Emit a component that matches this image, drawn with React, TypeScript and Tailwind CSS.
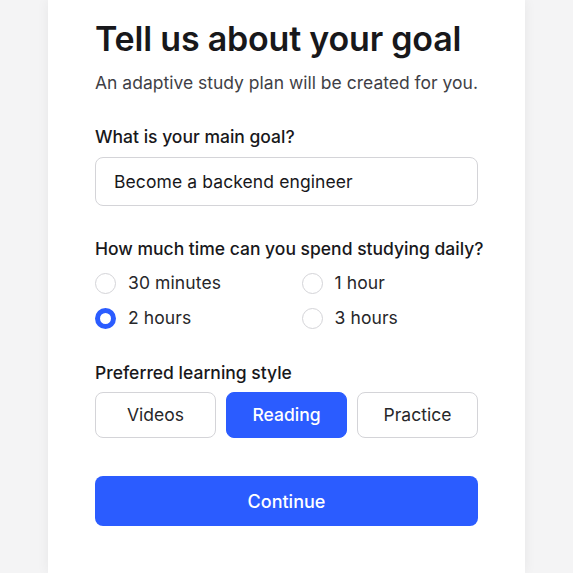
import { useState } from "react";

const times = ["30 minutes", "1 hour", "2 hours", "3 hours"];
const styles = ["Videos", "Reading", "Practice"];

export default function App() {
  const [goal, setGoal] = useState<string>("Become a backend engineer");
  const [time, setTime] = useState<string>("2 hours");
  const [style, setStyle] = useState<string>("Reading");

  return (
    <div
      className="flex min-h-[573px] justify-center bg-[#f4f4f5]"
      style={{ fontFamily: "Inter, 'Noto Sans', sans-serif" }}
    >
      <div className="w-[477px] bg-white px-[47px] pt-[17px] pb-[40px] shadow-[0_0_12px_rgba(0,0,0,0.06)]">
        <h1 className="whitespace-nowrap text-[34px] font-semibold leading-[44px] tracking-[-0.2px] text-[#18181b]">
          Tell us about your goal
        </h1>
        <p className="mt-[10px] whitespace-nowrap text-[17.5px] leading-[24px] text-[#3f3f46]">
          An adaptive study plan will be created for you.
        </p>

        <label className="mt-[30px] block whitespace-nowrap text-[17.5px] font-medium leading-[24px] text-[#18181b]">
          What is your main goal?
        </label>
        <input
          type="text"
          value={goal}
          onChange={(e) => setGoal(e.target.value)}
          className="mt-[8px] h-[49px] w-full rounded-[8px] border border-[#d4d4d8] px-[18px] text-[17.5px] tracking-[0.1px] text-[#18181b] outline-none"
        />

        <div className="mt-[31px] whitespace-nowrap text-[17.5px] font-medium leading-[24px] text-[#18181b]">
          How much time can you spend studying daily?
        </div>
        <div className="mt-[12px] grid grid-cols-2 gap-x-[30px] gap-y-[14px]">
          {times.map((t) => (
            <label key={t} className="flex h-[21px] cursor-pointer items-center gap-[12px] text-[17.5px] tracking-[0.1px] text-[#27272a]">
              <input
                type="radio"
                name="time"
                checked={time === t}
                onChange={() => setTime(t)}
                className="sr-only"
              />
              <span
                className={
                  time === t
                    ? "h-[21px] w-[21px] shrink-0 rounded-full border-[5px] border-[#2b5cff] bg-white"
                    : "h-[21px] w-[21px] shrink-0 rounded-full border border-[#d4d4d8] bg-white"
                }
              />
              {t}
            </label>
          ))}
        </div>

        <div className="mt-[32px] whitespace-nowrap text-[17.5px] font-medium leading-[24px] text-[#18181b]">
          Preferred learning style
        </div>
        <div className="mt-[7px] grid grid-cols-3 gap-[10px]">
          {styles.map((s) => (
            <button
              key={s}
              onClick={() => setStyle(s)}
              className={
                style === s
                  ? "h-[46px] rounded-[8px] border border-[#2b5cff] bg-[#2b5cff] text-[17.5px] font-medium text-white"
                  : "h-[46px] rounded-[8px] border border-[#d4d4d8] bg-white text-[17.5px] text-[#27272a]"
              }
            >
              {s}
            </button>
          ))}
        </div>

        <button className="mt-[38px] h-[50px] w-full rounded-[8px] bg-[#2b5cff] text-[18px] font-medium text-white">
          Continue
        </button>
      </div>
    </div>
  );
}
